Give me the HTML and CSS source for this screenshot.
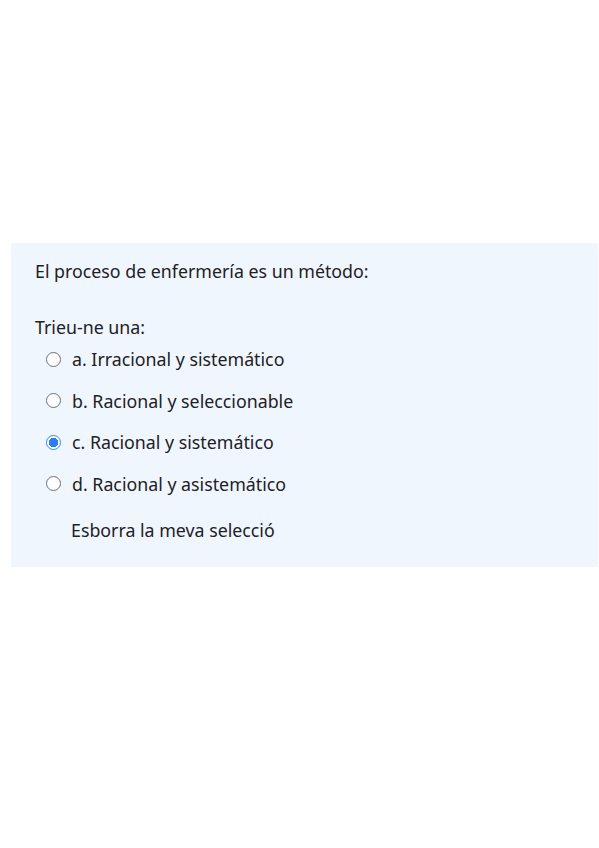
FILE: index.html
```html
<!DOCTYPE html>
<html>
<head>
<meta charset="utf-8">
<link rel="stylesheet" href="styles.css">
</head>
<body>
<div class="page">
  <div class="que">
    <div class="qtext">El proceso de enfermería es un método:</div>
    <div class="prompt">Trieu-ne una:</div>
    <div class="answers">
      <label class="opt"><span class="radio"></span><span>a. Irracional y sistemático</span></label>
      <label class="opt"><span class="radio"></span><span>b. Racional y seleccionable</span></label>
      <label class="opt"><span class="radio checked"></span><span>c. Racional y sistemático</span></label>
      <label class="opt"><span class="radio"></span><span>d. Racional y asistemático</span></label>
    </div>
    <div class="clear">Esborra la meva selecció</div>
  </div>
</div>
</body>
</html>
```
FILE: styles.css
```css
html, body { margin: 0; padding: 0; background: #fff; }
body { font-family: "Noto Sans", "Open Sans", sans-serif; color: #1d2125; }
.page { padding-top: 243px; padding-left: 11px; padding-right: 1px; }
.que {
  background: #f0f6fd;
  padding: 14px 24px 23px 24px;
  font-size: 17.8px;
  line-height: 28px;
}
.qtext { margin-bottom: 28px; }
.prompt { margin-bottom: 4px; }
.answers { display: flex; flex-direction: column; gap: 13.5px; padding-left: 11px; }
.opt { display: flex; align-items: center; gap: 11px; }
.radio {
  width: 13px; height: 13px; border: 1.5px solid #6c6f73; border-radius: 50%;
  background: #fff; box-sizing: content-box; flex: none;
}
.radio.checked {
  border-color: #3b82f6;
  background: radial-gradient(circle, #2a7ef2 0 4.5px, #fff 5px);
}
.clear { padding-left: 36px; margin-top: 18px; }
```
